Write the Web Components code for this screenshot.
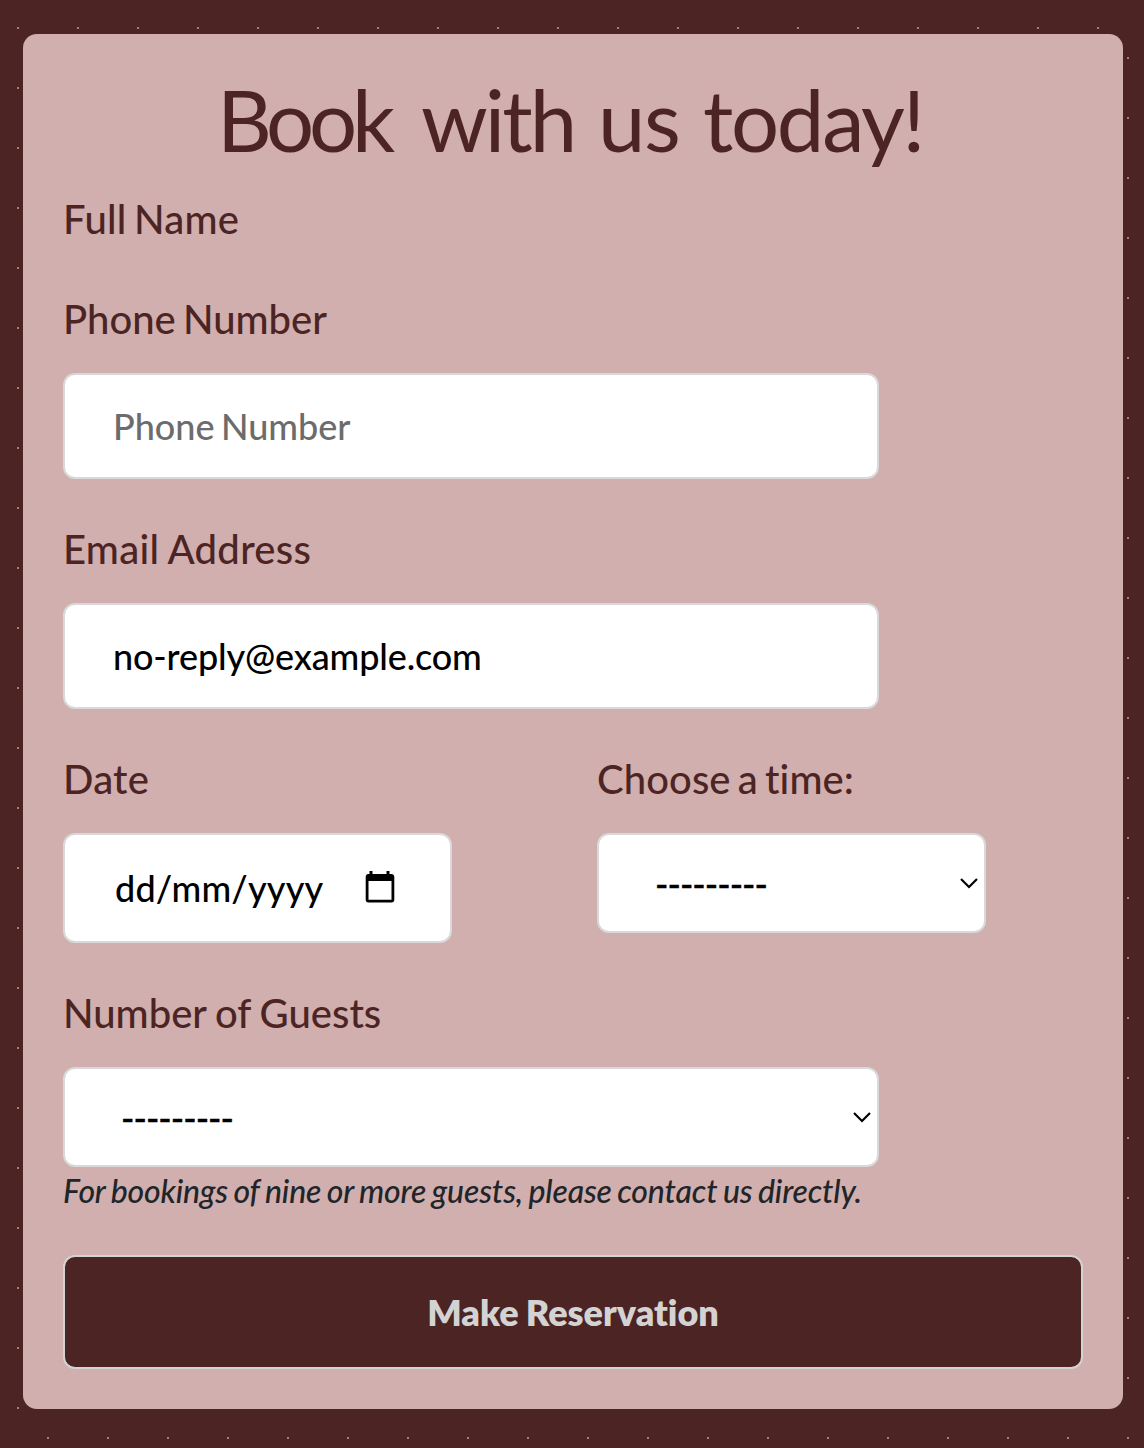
<!DOCTYPE html>
<html lang="en">
<head>
<meta charset="utf-8">
<title>Book with us today!</title>
<style>
html,body{margin:0;height:100%}
body{font-family:Lato,"Open Sans",sans-serif;background:#4d2424;font-variant-ligatures:none}
</style>
</head>
<body>
<booking-page>
  <booking-card>
    <booking-title slot="title"></booking-title>
    <form-field label="Full Name" style="--after:40px;--gap:0px;--track:.25px"></form-field>
    <form-field label="Phone Number"><text-box muted>Phone Number</text-box></form-field>
    <form-field label="Email Address" style="--track:.3px;--word:-1px"><text-box style="letter-spacing:-.14px">no-reply@example.com</text-box></form-field>
    <form-row>
      <form-field label="Date" style="--track:.25px"><date-box>dd/mm/yyyy</date-box></form-field>
      <form-field label="Choose a time:" style="--track:.08px"><select-box>---------</select-box></form-field>
    </form-row>
    <form-field label="Number of Guests" style="--after:0px;--word:-1.2px"><select-box>---------</select-box></form-field>
    <help-text>For bookings of nine or more guests, please contact us directly.</help-text>
    <submit-button>Make Reservation</submit-button>
  </booking-card>
</booking-page>
<script>
const define = (name, html) => customElements.define(name, class extends HTMLElement {
  constructor() {
    super();
    this.attachShadow({ mode: 'open' }).innerHTML = html;
  }
  connectedCallback() {
    const label = this.shadowRoot.querySelector('label');
    if (label) label.textContent = this.getAttribute('label');
  }
});

const box = `box-sizing:border-box;display:flex;align-items:center;width:80%;background:#fff;
  border:2px solid #d9d9d9;border-radius:12px;color:#000;font-size:36px;line-height:54px;white-space:nowrap;
  font-weight:500;word-spacing:-.075em;`;

define('booking-page', `<style>
:host{display:block;box-sizing:border-box;height:1448px;padding:34px 21px 39px 23px;
  background:
   conic-gradient(from 90deg at 58px 58px,#bf736e 25%,transparent 0) 19px 29px/60px 60px,
   conic-gradient(from 90deg at 58px 58px,#bf736e 25%,transparent 0) 49px 59px/60px 60px,#4d2424}
</style><slot></slot>`);

define('booking-card', `<style>
:host{display:block;box-sizing:border-box;height:1375px;padding:40px;border-radius:14px;background:#d0afae;color:#4d2424}
</style><slot name="title"></slot><slot></slot>`);

define('booking-title', `<style>
:host{display:block;height:116px}
h1{margin:0;display:flex;padding-left:154px;font-size:85px;line-height:91px;font-weight:400;white-space:pre}
span{display:block;flex:none}
.a{width:204px;letter-spacing:-5.2px}.b{width:177px;letter-spacing:-3px}.c{width:105px;letter-spacing:-1.5px}.d{letter-spacing:-2.3px}
</style><h1><span class="a">Book </span><span class="b">with </span><span class="c">us </span><span class="d">today!</span></h1>`);

define('form-field', `<style>
:host{display:block;margin-bottom:var(--after,41px)}
label{display:block;font-size:40px;line-height:58px;padding-bottom:2px;font-weight:500;word-spacing:var(--word,-3px);letter-spacing:var(--track,0px);margin-bottom:var(--gap,23px);white-space:nowrap}
</style><label></label><slot></slot>`);

define('form-row', `<style>
:host{display:grid;grid-template-columns:1fr 1fr;column-gap:48px;align-items:start}
</style><slot></slot>`);

define('text-box', `<style>
:host{${box}height:106px;padding:0 48px}
:host([muted]){color:#6c6c6c}
</style><slot></slot>`);

define('date-box', `<style>
:host{${box}height:110px;padding:0 55px 0 50px;justify-content:space-between;letter-spacing:.2px}
svg{display:block;width:30px;height:32px;margin-top:-2px}
</style><slot></slot><svg viewBox="0 0 30 32"><path fill="#000" fill-rule="evenodd" d="M4.500 0h3v3h14V0h3v3h1.500Q29.300 3 29.300 6V28.500Q29.300 31.500 26.500 31.500H3.500Q.7 31.500 .7 28.500V6Q.7 3 3.500 3H4.500ZM3.500 10V28.700H26.500V10Z"/></svg>`);

define('select-box', `<style>
:host{${box}height:100px;padding:0 6px 0 56px;justify-content:space-between}
span{letter-spacing:-.95px;padding-top:1px;-webkit-text-stroke:.4px #000}
svg{display:block;width:18px;height:12px;margin-top:-1px}
</style><span><slot></slot></span><svg viewBox="0 0 18 12"><path d="M1 2L9 10L17 2" fill="none" stroke="#000" stroke-width="2.2"/></svg>`);

define('help-text', `<style>
:host{display:block;font-size:32px;line-height:48px;font-style:italic;font-weight:500;word-spacing:-1.7px;letter-spacing:-.16px;color:#212529;white-space:nowrap;margin-bottom:40px}
</style><slot></slot>`);

define('submit-button', `<style>
:host{display:block}
button{display:block;box-sizing:border-box;width:100%;height:114px;padding:0;margin:0;background:#4d2424;color:#d3d3d3;border:2px solid #d3d3d3;border-radius:12px;font:800 36px/54px Lato,sans-serif;font-variant-ligatures:none;word-spacing:-1.2px}
</style><button type="button"><slot></slot></button>`);
</script>
</body>
</html>
